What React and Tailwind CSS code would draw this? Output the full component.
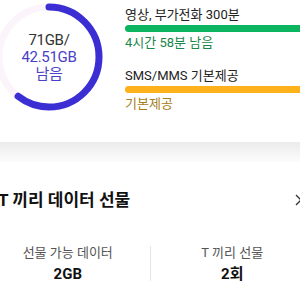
export default function App() {
  const r = 50;
  const c = 2 * Math.PI * r;
  const used = 0.605;
  return (
    <div className="w-[300px] h-[300px] overflow-hidden bg-white" style={{ fontFamily: 'Roboto, "Noto Sans CJK KR", sans-serif' }}>
      <div className="ml-[-14px] w-[328px]">
        {/* 사용량 */}
        <div className="flex pt-[3px] h-[142px]">
          <div className="relative w-[108px] h-[108px] ml-[9px] shrink-0">
            <svg width="108" height="108" viewBox="0 0 108 108" className="-rotate-90">
              <circle cx="54" cy="54" r={r} fill="none" stroke="#fbf4fa" strokeWidth="7" />
              <circle
                cx="54"
                cy="54"
                r={r}
                fill="none"
                stroke="#3b2fd3"
                strokeWidth="7"
                strokeLinecap="round"
                strokeDasharray={`${c * used} ${c}`}
              />
            </svg>
            <div className="absolute inset-0 flex flex-col items-center justify-center text-[15px] leading-[17px] tracking-[-0.3px]">
              <span className="text-[#333]">71GB/</span>
              <span className="text-[#4b40c8]">42.51GB</span>
              <span className="text-[#4b40c8]">남음</span>
            </div>
          </div>
          <div className="flex-1 ml-[22px] pt-[3px]">
            <p className="text-[13px] leading-[18px] text-[#222]">영상, 부가전화 300분</p>
            <div className="mt-[1px] h-[7px] rounded-l-full bg-[#0bb45e]" />
            <p className="mt-[2px] text-[13px] leading-[18px] text-[#17874a]">4시간 58분 남음</p>
            <p className="mt-[15px] text-[13px] leading-[18px] text-[#222]">SMS/MMS 기본제공</p>
            <div className="mt-[1px] h-[7px] rounded-l-full bg-[#fdb21c]" />
            <p className="mt-[2px] text-[13px] leading-[18px] text-[#a7801c]">기본제공</p>
          </div>
        </div>

        {/* 구분 */}
        <div className="h-[20px] bg-gradient-to-b from-[#ebebeb] to-[#fcfcfc]" />

        {/* T 끼리 데이터 선물 */}
        <div className="pt-[27px] px-[12px] flex items-center justify-between">
          <h2 className="text-[17px] leading-[22px] font-bold text-[#111]">T 끼리 데이터 선물</h2>
          <svg width="10" height="12" viewBox="0 0 10 12" className="mr-[-2px]">
            <path d="M2 1l5 5-5 5" fill="none" stroke="#333" strokeWidth="1.3" />
          </svg>
        </div>
        <div className="mt-[33px] flex">
          <div className="flex-1 flex flex-col items-center">
            <span className="text-[13px] leading-[18px] text-[#555]">선물 가능 데이터</span>
            <span className="mt-[3px] text-[15px] leading-[18px] font-bold text-[#111]">2GB</span>
          </div>
          <div className="w-px h-[35px] bg-[#e5e5e5] mt-[2px]" />
          <div className="flex-1 flex flex-col items-center">
            <span className="text-[13px] leading-[18px] text-[#555]">T 끼리 선물</span>
            <span className="mt-[3px] text-[15px] leading-[18px] font-bold text-[#111]">2회</span>
          </div>
        </div>
      </div>
    </div>
  );
}
